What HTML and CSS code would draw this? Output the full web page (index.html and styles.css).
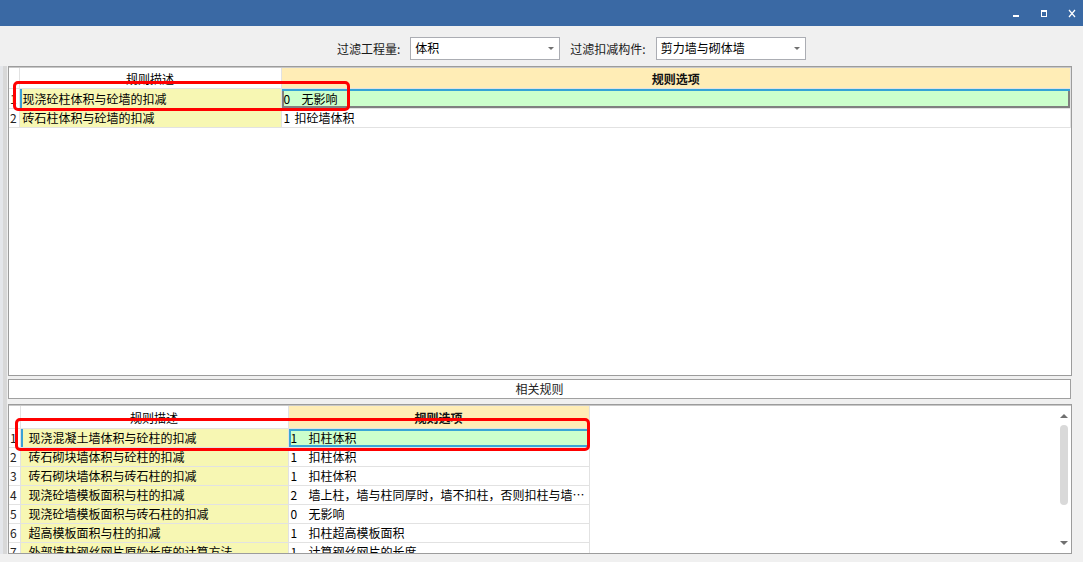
FILE: index.html
```html
<!DOCTYPE html>
<html lang="zh-CN">
<head>
    <meta charset="UTF-8">
    <title>扣减规则</title>
    <link rel="stylesheet" href="styles.css">
</head>
<body>
    <div class="titlebar">
        <div class="win-btns">
            <svg width="8" height="8" viewBox="0 0 8 8"><rect x="1" y="6" width="6" height="2" fill="#fff"/></svg>
            <svg width="8" height="9" viewBox="0 0 8 9"><rect x="1.5" y="1.5" width="5" height="6" fill="none" stroke="#fff" stroke-width="1"/><rect x="1" y="1" width="6" height="2" fill="#fff"/></svg>
            <svg width="8" height="9" viewBox="0 0 8 9"><path d="M1 1 L7 8 M7 1 L1 8" stroke="#fff" stroke-width="1.2" fill="none"/></svg>
        </div>
    </div>

    <div class="filters">
        <span class="flabel">过滤工程量:</span>
        <div class="combo">体积<span class="arrow"></span></div>
        <span class="flabel">过滤扣减构件:</span>
        <div class="combo">剪力墙与砌体墙<span class="arrow"></span></div>
    </div>

    <div class="panes">
        <div class="grid grid-top">
            <table class="rules">
                <colgroup><col class="c-num"><col class="c-desc"><col></colgroup>
                <tr class="head">
                    <th></th><th class="h-desc">规则描述</th><th class="h-opt">规则选项</th>
                </tr>
                <tr class="first">
                    <td class="num">1</td>
                    <td class="desc cur">现浇砼柱体积与砼墙的扣减</td>
                    <td class="opt sel-top"><span class="n wide">0</span>无影响</td>
                </tr>
                <tr>
                    <td class="num">2</td>
                    <td class="desc">砖石柱体积与砼墙的扣减</td>
                    <td class="opt"><span class="n">1</span>扣砼墙体积</td>
                </tr>
            </table>
            <div class="mark mark-top"></div>
        </div>

        <div class="related">相关规则</div>

        <div class="grid grid-bottom">
            <div class="scroll-area">
                <table class="rules rules-b">
                    <colgroup><col class="c-num-b"><col class="c-desc-b"><col class="c-opt-b"></colgroup>
                    <tr class="head">
                        <th></th><th class="h-desc">规则描述</th><th class="h-opt">规则选项</th>
                    </tr>
                    <tr>
                        <td class="num">1</td>
                        <td class="desc cur">现浇混凝土墙体积与砼柱的扣减</td>
                        <td class="opt sel-bottom"><span class="n wide">1</span>扣柱体积</td>
                    </tr>
                    <tr>
                        <td class="num">2</td>
                        <td class="desc">砖石砌块墙体积与砼柱的扣减</td>
                        <td class="opt"><span class="n wide">1</span>扣柱体积</td>
                    </tr>
                    <tr>
                        <td class="num">3</td>
                        <td class="desc">砖石砌块墙体积与砖石柱的扣减</td>
                        <td class="opt"><span class="n wide">1</span>扣柱体积</td>
                    </tr>
                    <tr>
                        <td class="num">4</td>
                        <td class="desc">现浇砼墙模板面积与柱的扣减</td>
                        <td class="opt"><span class="n wide">2</span>墙上柱，墙与柱同厚时，墙不扣柱，否则扣柱与墙接触面积</td>
                    </tr>
                    <tr>
                        <td class="num">5</td>
                        <td class="desc">现浇砼墙模板面积与砖石柱的扣减</td>
                        <td class="opt"><span class="n wide">0</span>无影响</td>
                    </tr>
                    <tr>
                        <td class="num">6</td>
                        <td class="desc">超高模板面积与柱的扣减</td>
                        <td class="opt"><span class="n wide">1</span>扣柱超高模板面积</td>
                    </tr>
                    <tr>
                        <td class="num">7</td>
                        <td class="desc">外部墙柱钢丝网片原始长度的计算方法</td>
                        <td class="opt"><span class="n wide">1</span>计算钢丝网片的长度</td>
                    </tr>
                </table>
            </div>
            <div class="vscroll">
                <span class="up"></span>
                <span class="thumb"></span>
                <span class="down"></span>
            </div>
            <div class="mark mark-bottom"></div>
        </div>
    </div>
</body>
</html>
```

FILE: styles.css
```css
body {
  margin: 0;
  background: #f0f0f0;
  font-family: "Noto Sans CJK SC", "Microsoft YaHei", sans-serif;
  font-size: 12px;
  color: #000;
  width: 1083px;
  height: 562px;
  overflow: hidden;
}

.titlebar {
  height: 26px;
  background: #3a69a4;
  display: flex;
  justify-content: flex-end;
  align-items: center;
}

.win-btns {
  display: flex;
  gap: 20px;
  padding-right: 7px;
  padding-top: 1px;
}

.filters {
  display: flex;
  align-items: center;
  padding: 11px 0 0 337px;
  height: 23px;
}

.flabel {
  margin-right: 10px;
  color: #1a1a1a;
}

.combo {
  position: relative;
  width: 144px;
  height: 21px;
  line-height: 20px;
  padding-left: 4px;
  background: #fff;
  border: 1px solid #abadb3;
  margin-right: 10px;
}

.combo .arrow {
  position: absolute;
  right: 5px;
  top: 9px;
  border-left: 3px solid transparent;
  border-right: 3px solid transparent;
  border-top: 3px solid #707070;
}

.panes {
  margin-top: 6px;
  padding-left: 8px;
  width: 1064px;
  background: linear-gradient(to right, #e4e6ea 0 3px, #d8d8d8 3px 7px, transparent 7px);
}

.grid {
  position: relative;
  background: #fff;
  border: 1px solid #9c9c9c;
  box-shadow: inset 0 1px 0 #c8c8c8;
  overflow: hidden;
}

.grid-top {
  height: 308px;
}

.grid-bottom {
  height: 148px;
  display: flex;
}

.scroll-area {
  flex: 1;
  overflow: hidden;
}

.rules {
  border-collapse: collapse;
  table-layout: fixed;
  width: 100%;
  margin-top: 1px;
}

.rules-b {
  width: 580px;
}

.c-num { width: 10px; }
.c-desc { width: 262px; }
.c-num-b { width: 11px; }
.c-desc-b { width: 268px; }
.c-opt-b { width: 301px; }

.rules th,
.rules td {
  height: 18px;
  padding: 0;
  border-right: 1px solid #e2e2e2;
  border-bottom: 1px solid #e2e2e2;
  white-space: nowrap;
  overflow: hidden;
  text-overflow: ellipsis;
  line-height: 18px;
}

.rules .head th {
  height: 19px;
  padding-top: 1px;
  font-weight: normal;
  background: #fff;
}

.rules-b .head th {
  height: 20px;
  padding-top: 2px;
}

.rules .first td {
  height: 18px;
  padding-top: 1px;
}

.rules .head .h-opt {
  background: #ffedb6;
  font-weight: bold;
  color: #111;
}

.rules td.num {
  padding-left: 1px;
  color: #222;
  overflow: hidden;
  text-overflow: clip;
}

.rules td.desc {
  background: #f7f7b3;
  padding-left: 3px;
}

.rules-b td.desc {
  padding-left: 8px;
}

.rules td.cur {
  box-shadow: inset 2px 0 0 #3aa0d6;
}

.rules td.opt {
  padding-left: 2px;
  background: #fff;
}

.n {
  display: inline-block;
  width: 11px;
}

.n.wide {
  width: 18px;
}

.rules td.sel-top {
  background: #ccffcc;
  box-shadow: inset 0 2px 0 #35a3d6, inset 2px 0 0 #808080, inset -2px 0 0 #808080, inset 0 -2px 0 #808080;
}

.rules td.sel-bottom {
  background: #ccffcc;
  box-shadow: inset 0 0 0 2px #3aa6d6;
}

.related {
  margin: 3px 1px 5px 0;
  height: 18px;
  line-height: 18px;
  text-align: center;
  background: #fff;
  border: 1px solid #a0a0a0;
  color: #222;
}

.vscroll {
  width: 14px;
  display: flex;
  flex-direction: column;
  align-items: center;
  padding: 9px 0 8px;
}

.vscroll .up {
  border-left: 4px solid transparent;
  border-right: 4px solid transparent;
  border-bottom: 4px solid #707070;
}

.vscroll .thumb {
  margin-top: 7px;
  width: 8px;
  height: 80px;
  border-radius: 4px;
  background: #d9d9d9;
}

.vscroll .down {
  margin-top: auto;
  border-left: 4px solid transparent;
  border-right: 4px solid transparent;
  border-top: 4px solid #707070;
}

.mark {
  position: absolute;
  border: 3px solid #ff0000;
  border-radius: 5px;
  pointer-events: none;
}

.mark-top {
  left: 4px;
  top: 14px;
  width: 331px;
  height: 24px;
}

.mark-bottom {
  left: 6px;
  top: 13px;
  width: 569px;
  height: 27px;
}
```
